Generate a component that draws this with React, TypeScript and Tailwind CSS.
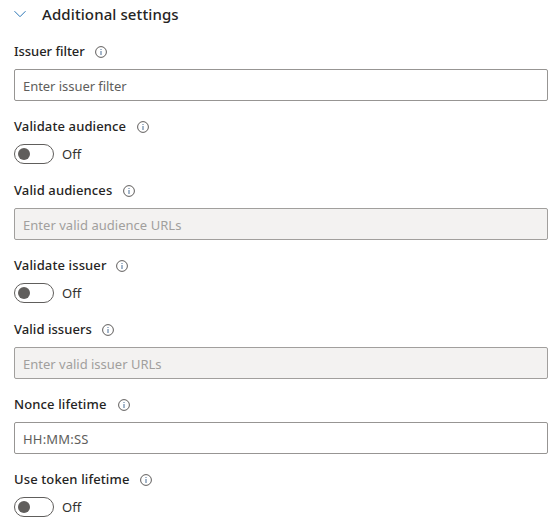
import React from "react";

function InfoIcon() {
  return (
    <svg className="mt-[2px] h-3 w-3 shrink-0" viewBox="0 0 12 12" fill="none">
      <circle cx="6" cy="6" r="5.4" stroke="#4d4b49" strokeWidth="0.9" />
      <rect x="5.5" y="5" width="1" height="4" fill="#4a6f96" />
      <rect x="5.5" y="3" width="1" height="1" fill="#4a6f96" />
    </svg>
  );
}

function Label({ text, width, tracking = "tracking-[0.12px]" }: { text: string; width: string; tracking?: string }) {
  return (
    <div className="flex h-5 items-center">
      <span className={`shrink-0 whitespace-nowrap text-[13px] font-medium leading-5 text-[#252423] ${width} ${tracking}`}>{text}</span>
      <InfoIcon />
    </div>
  );
}

function Field({ label, width, labelTracking, placeholder, tracking, disabled = false }: {
  label: string; width: string; labelTracking?: string; placeholder: string; tracking: string; disabled?: boolean;
}) {
  return (
    <div className="mb-[15px] flex flex-col gap-2">
      <Label text={label} width={width} tracking={labelTracking} />
      <div className={`flex h-8 items-center rounded-[2px] border px-2 ${disabled ? "border-[#a19f9d] bg-[#f3f2f1] text-[#a19f9d]" : "border-[#979593] bg-white text-[#605e5c]"}`}>
        <span className={`mt-[2px] whitespace-nowrap text-[13px] leading-5 ${tracking}`}>{placeholder}</span>
      </div>
    </div>
  );
}

function Toggle({ label, width }: { label: string; width: string }) {
  return (
    <div className="mb-4 flex flex-col gap-2">
      <Label text={label} width={width} />
      <div className="flex h-5 items-center gap-2">
        <div className="flex h-5 w-10 items-center rounded-full border border-[#605e5c] pl-[3px]">
          <div className="h-3 w-3 rounded-full bg-[#605e5c]" />
        </div>
        <span className="text-[13px] leading-5 text-[#323130]">Off</span>
      </div>
    </div>
  );
}

export default function App() {
  return (
    <main className="h-[531px] w-[559px] overflow-hidden bg-white pl-[14px] pr-[11px] pt-1 font-['Noto_Sans',sans-serif]">
      <div className="mb-[17px] flex h-5 items-center">
        <svg className="mr-4 h-3 w-3 shrink-0" viewBox="0 0 12 12" fill="none">
          <path d="M0.5 3.2L6 8.7L11.5 3.2" stroke="#2b76b5" strokeWidth="1" />
        </svg>
        <h2 className="whitespace-nowrap text-[15px] font-medium leading-5 tracking-[0.1px] text-[#252423]">Additional settings</h2>
      </div>
      <Field label="Issuer filter" width="w-[81px]" labelTracking="tracking-[-0.05px]" placeholder="Enter issuer filter" tracking="tracking-[-0.05px]" />
      <Toggle label="Validate audience" width="w-[122.5px]" />
      <Field label="Valid audiences" width="w-[108.5px]" placeholder="Enter valid audience URLs" tracking="tracking-[0.03px]" disabled />
      <Toggle label="Validate issuer" width="w-[101.5px]" />
      <Field label="Valid issuers" width="w-[88px]" labelTracking="tracking-[0.05px]" placeholder="Enter valid issuer URLs" tracking="tracking-normal" disabled />
      <Field label="Nonce lifetime" width="w-[104px]" placeholder="HH:MM:SS" tracking="tracking-[0.2px]" />
      <Toggle label="Use token lifetime" width="w-[126px]" />
    </main>
  );
}
